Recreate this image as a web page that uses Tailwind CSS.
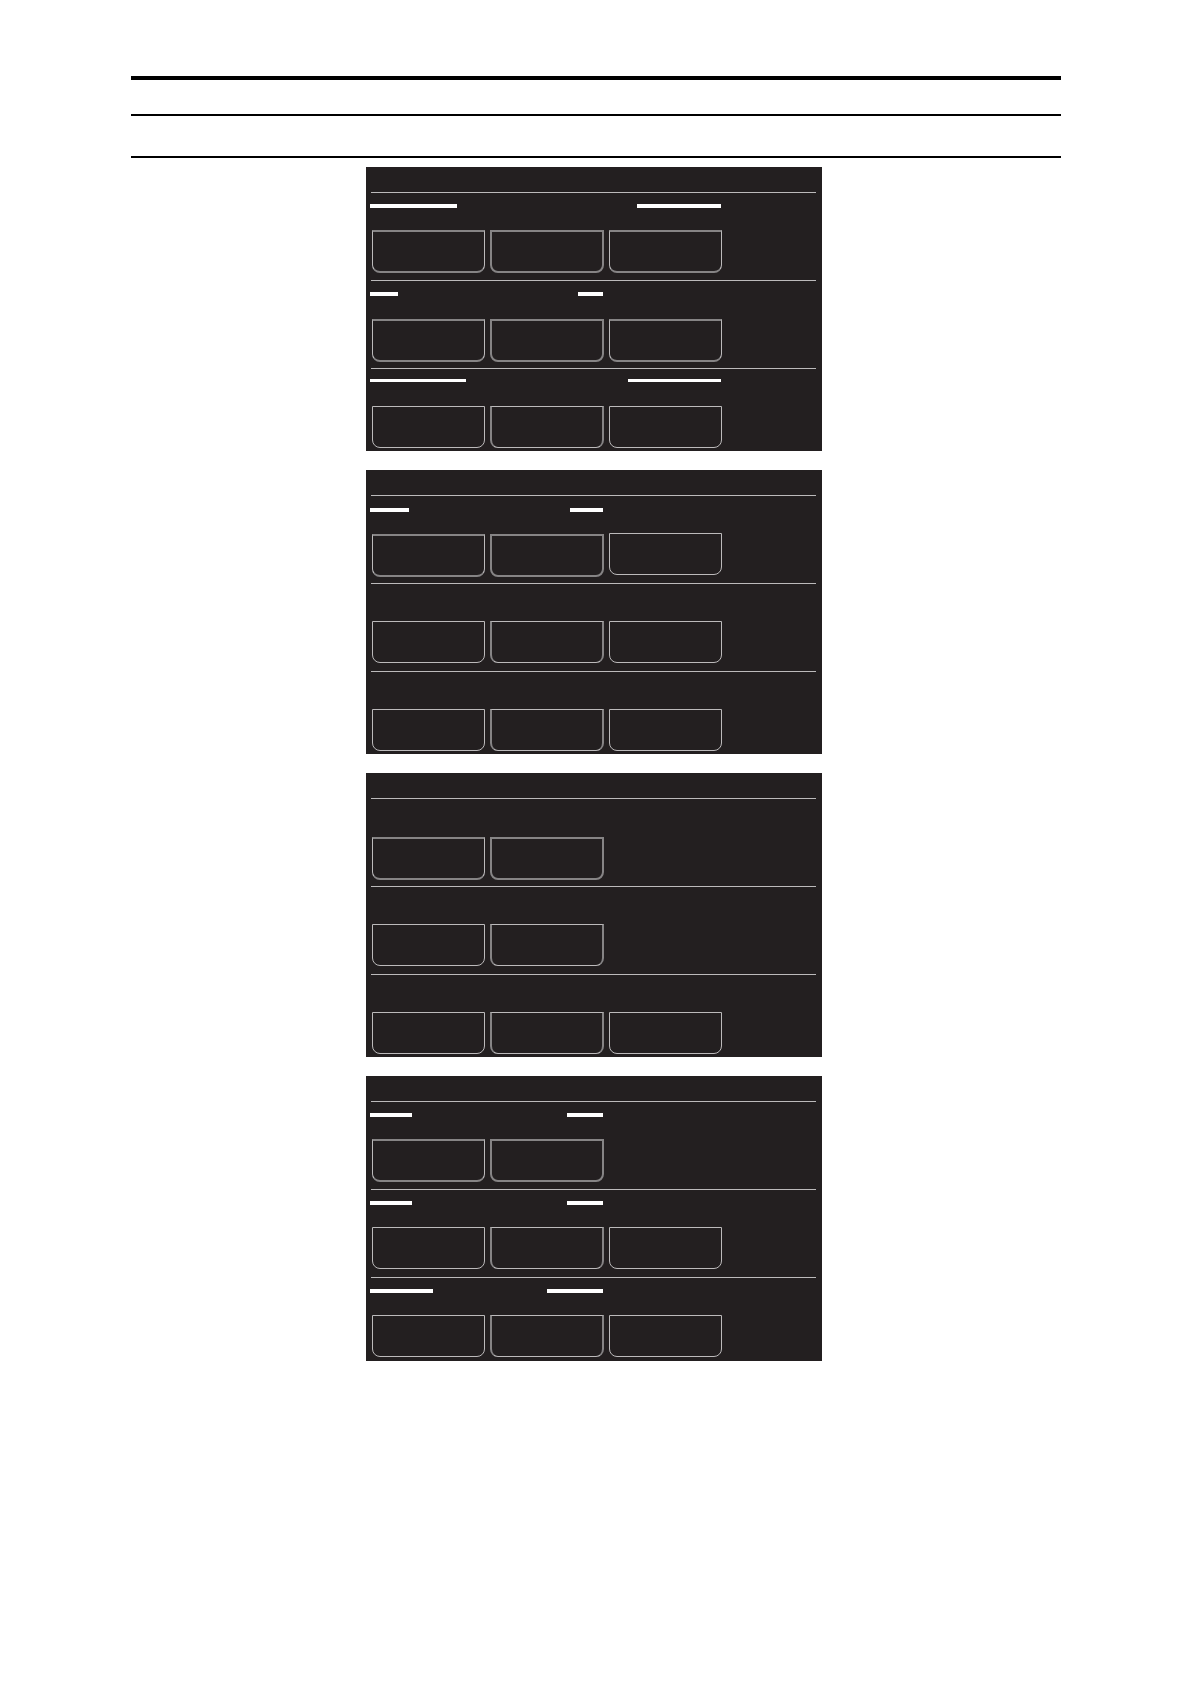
<!DOCTYPE html>
<html lang="en">
  <head>
    <meta charset="UTF-8">
    <meta name="viewport" content="width=device-width, initial-scale=1.0">
    <title>Screens</title>
    <script src="https://cdn.jsdelivr.net/npm/@tailwindcss/browser@4"></script>
  </head>
  <body class="min-h-screen bg-white pt-[76px] pl-[131px] pr-[130px] font-['Liberation_Sans',sans-serif]">

    <header class="border-t-4 border-black">
        <div class="h-[36px] border-b-2 border-black"></div>
        <div class="h-[42px] border-b-2 border-black"></div>
    </header>

    <main class="flex flex-col items-center gap-[19px] pt-[9px] pr-1 pb-8">

        <!-- screen 1 -->
        <section class="w-full max-w-[456px] bg-[#231f20] pt-[25px] pl-[5px] pr-[6px] pb-[3px]">
            <div class="border-t border-[#bcbabb] pb-[7px]">
                <div class="-ml-px flex h-[37px] w-[351px] justify-between pt-[11px]">
                    <span class="h-1 w-[87px] bg-white"></span>
                    <span class="h-1 w-[84px] bg-white"></span>
                </div>
                <div class="ml-px grid w-[350px] grid-cols-3 gap-[5px]">
                    <button type="button" class="h-[43px] rounded-b-[8px] border border-y-2 border-x-[#bcbabb] border-y-[#868485]"></button>
                    <button type="button" class="h-[43px] rounded-b-[8px] border-2 border-[#868485]"></button>
                    <button type="button" class="h-[43px] rounded-b-[8px] border border-y-2 border-x-[#bcbabb] border-y-[#868485]"></button>
                </div>
            </div>
            <div class="border-t border-[#bcbabb] pb-[6px]">
                <div class="-ml-px flex h-[38px] w-[233px] justify-between pt-[11px]">
                    <span class="h-1 w-[28px] bg-white"></span>
                    <span class="h-1 w-[25px] bg-white"></span>
                </div>
                <div class="ml-px grid w-[350px] grid-cols-3 gap-[5px]">
                    <button type="button" class="h-[43px] rounded-b-[8px] border border-y-2 border-x-[#bcbabb] border-y-[#868485]"></button>
                    <button type="button" class="h-[43px] rounded-b-[8px] border-2 border-[#868485]"></button>
                    <button type="button" class="h-[43px] rounded-b-[8px] border border-y-2 border-x-[#bcbabb] border-y-[#868485]"></button>
                </div>
            </div>
            <div class="border-t border-[#bcbabb]">
                <div class="-ml-px flex h-[37px] w-[351px] justify-between pt-[10px]">
                    <span class="h-[3px] w-[96px] bg-white"></span>
                    <span class="h-[3px] w-[93px] bg-white"></span>
                </div>
                <div class="ml-px grid w-[350px] grid-cols-3 gap-[5px]">
                    <button type="button" class="h-[42px] rounded-b-[8px] border border-[#bcbabb]"></button>
                    <button type="button" class="h-[42px] rounded-b-[8px] border border-x-2 border-x-[#868485] border-y-[#bcbabb]"></button>
                    <button type="button" class="h-[42px] rounded-b-[8px] border border-[#bcbabb]"></button>
                </div>
            </div>
        </section>

        <!-- screen 2 -->
        <section class="w-full max-w-[456px] bg-[#231f20] pt-[25px] pl-[5px] pr-[6px] pb-[3px]">
            <div class="border-t border-[#bcbabb] pb-[6px]">
                <div class="-ml-px flex h-[37px] w-[233px] justify-between pt-[12px]">
                    <span class="h-1 w-[39px] bg-white"></span>
                    <span class="h-1 w-[33px] bg-white"></span>
                </div>
                <div class="ml-px grid w-[350px] grid-cols-3 gap-[5px]">
                    <button type="button" class="mt-px h-[43px] rounded-b-[8px] border border-y-2 border-x-[#bcbabb] border-y-[#868485]"></button>
                    <button type="button" class="mt-px h-[43px] rounded-b-[8px] border-2 border-[#868485]"></button>
                    <button type="button" class="h-[42px] rounded-b-[8px] border border-[#bcbabb]"></button>
                </div>
            </div>
            <div class="border-t border-[#bcbabb] pt-[37px] pb-[8px]">
                <div class="ml-px grid w-[350px] grid-cols-3 gap-[5px]">
                    <button type="button" class="h-[42px] rounded-b-[8px] border border-[#bcbabb]"></button>
                    <button type="button" class="h-[42px] rounded-b-[8px] border border-x-2 border-x-[#868485] border-y-[#bcbabb]"></button>
                    <button type="button" class="h-[42px] rounded-b-[8px] border border-[#bcbabb]"></button>
                </div>
            </div>
            <div class="border-t border-[#bcbabb] pt-[37px]">
                <div class="ml-px grid w-[350px] grid-cols-3 gap-[5px]">
                    <button type="button" class="h-[42px] rounded-b-[8px] border border-[#bcbabb]"></button>
                    <button type="button" class="h-[42px] rounded-b-[8px] border border-x-2 border-x-[#868485] border-y-[#bcbabb]"></button>
                    <button type="button" class="h-[42px] rounded-b-[8px] border border-[#bcbabb]"></button>
                </div>
            </div>
        </section>

        <!-- screen 3 -->
        <section class="w-full max-w-[456px] bg-[#231f20] pt-[25px] pl-[5px] pr-[6px] pb-[3px]">
            <div class="border-t border-[#bcbabb] pt-[38px] pb-[6px]">
                <div class="ml-px grid w-[350px] grid-cols-3 gap-[5px]">
                    <button type="button" class="h-[43px] rounded-b-[8px] border border-y-2 border-x-[#bcbabb] border-y-[#868485]"></button>
                    <button type="button" class="h-[43px] rounded-b-[8px] border-2 border-[#868485]"></button>
                </div>
            </div>
            <div class="border-t border-[#bcbabb] pt-[37px] pb-[8px]">
                <div class="ml-px grid w-[350px] grid-cols-3 gap-[5px]">
                    <button type="button" class="h-[42px] rounded-b-[8px] border border-[#bcbabb]"></button>
                    <button type="button" class="h-[42px] rounded-b-[8px] border border-x-2 border-x-[#868485] border-y-[#bcbabb]"></button>
                </div>
            </div>
            <div class="border-t border-[#bcbabb] pt-[37px]">
                <div class="ml-px grid w-[350px] grid-cols-3 gap-[5px]">
                    <button type="button" class="h-[42px] rounded-b-[8px] border border-[#bcbabb]"></button>
                    <button type="button" class="h-[42px] rounded-b-[8px] border border-x-2 border-x-[#868485] border-y-[#bcbabb]"></button>
                    <button type="button" class="h-[42px] rounded-b-[8px] border border-[#bcbabb]"></button>
                </div>
            </div>
        </section>

        <!-- screen 4 -->
        <section class="w-full max-w-[456px] bg-[#231f20] pt-[25px] pl-[5px] pr-[6px] pb-1">
            <div class="border-t border-[#bcbabb] pb-[7px]">
                <div class="-ml-px flex h-[37px] w-[233px] justify-between pt-[11px]">
                    <span class="h-1 w-[42px] bg-white"></span>
                    <span class="h-1 w-[36px] bg-white"></span>
                </div>
                <div class="ml-px grid w-[350px] grid-cols-3 gap-[5px]">
                    <button type="button" class="h-[43px] rounded-b-[8px] border border-y-2 border-x-[#bcbabb] border-y-[#868485]"></button>
                    <button type="button" class="h-[43px] rounded-b-[8px] border-2 border-[#868485]"></button>
                </div>
            </div>
            <div class="border-t border-[#bcbabb] pb-[8px]">
                <div class="-ml-px flex h-[37px] w-[233px] justify-between pt-[11px]">
                    <span class="h-1 w-[42px] bg-white"></span>
                    <span class="h-1 w-[36px] bg-white"></span>
                </div>
                <div class="ml-px grid w-[350px] grid-cols-3 gap-[5px]">
                    <button type="button" class="h-[42px] rounded-b-[8px] border border-[#bcbabb]"></button>
                    <button type="button" class="h-[42px] rounded-b-[8px] border border-x-2 border-x-[#868485] border-y-[#bcbabb]"></button>
                    <button type="button" class="h-[42px] rounded-b-[8px] border border-[#bcbabb]"></button>
                </div>
            </div>
            <div class="border-t border-[#bcbabb]">
                <div class="-ml-px flex h-[37px] w-[233px] justify-between pt-[11px]">
                    <span class="h-1 w-[63px] bg-white"></span>
                    <span class="h-1 w-[56px] bg-white"></span>
                </div>
                <div class="ml-px grid w-[350px] grid-cols-3 gap-[5px]">
                    <button type="button" class="h-[42px] rounded-b-[8px] border border-[#bcbabb]"></button>
                    <button type="button" class="h-[42px] rounded-b-[8px] border border-x-2 border-x-[#868485] border-y-[#bcbabb]"></button>
                    <button type="button" class="h-[42px] rounded-b-[8px] border border-[#bcbabb]"></button>
                </div>
            </div>
        </section>

    </main>
  </body>
</html>
